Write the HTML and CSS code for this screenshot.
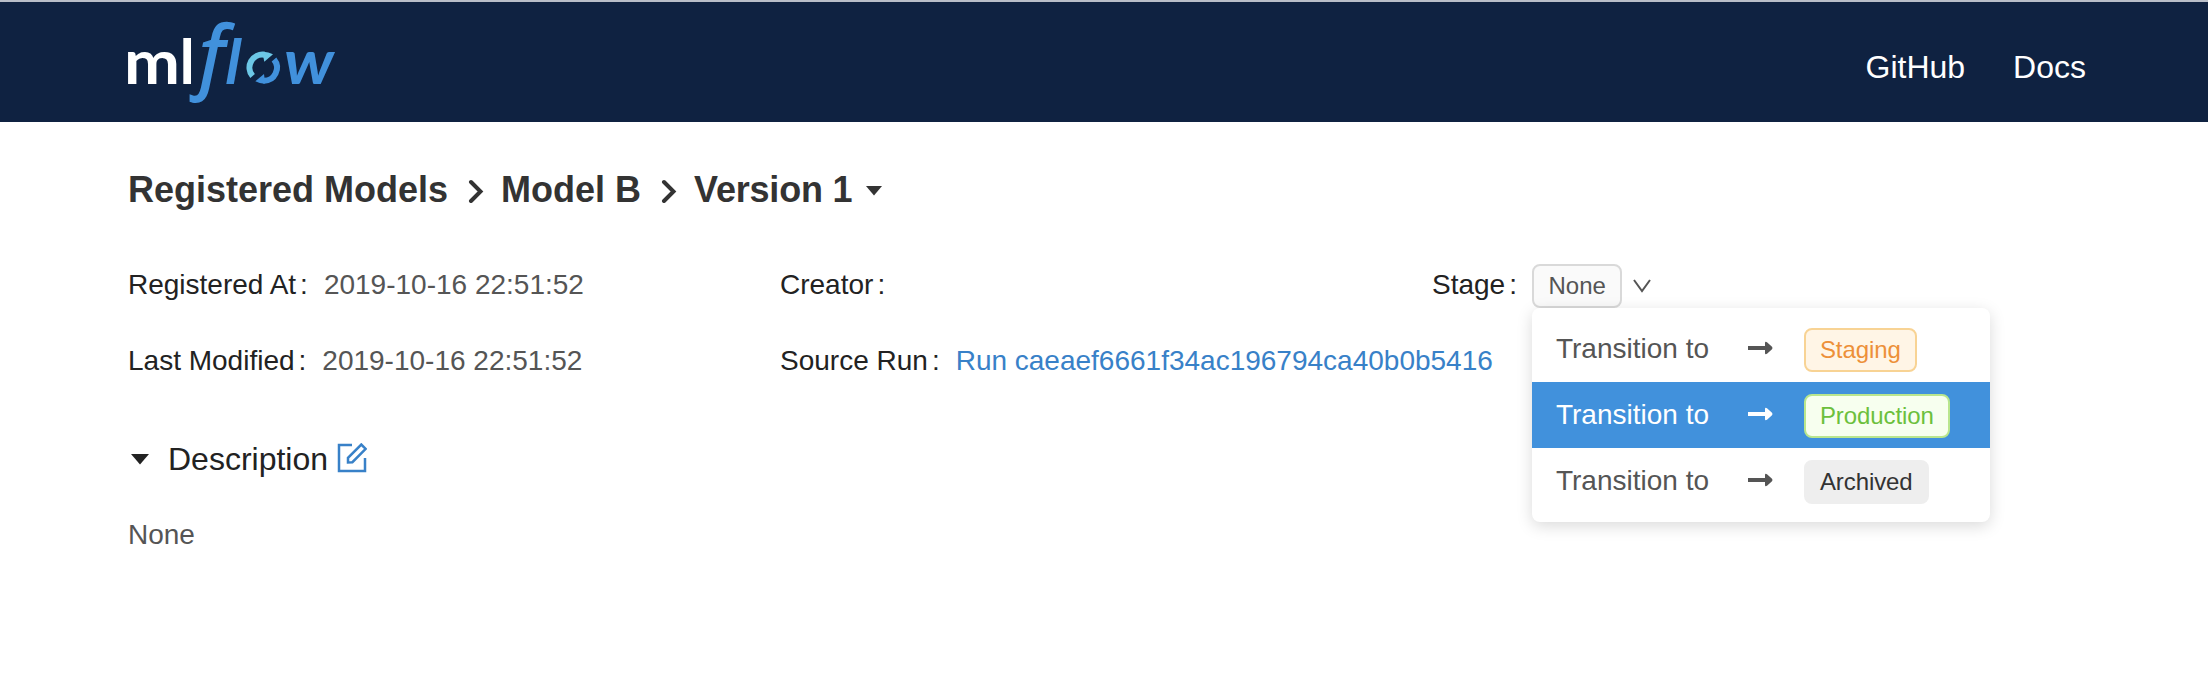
FILE: index.html
```html
<!DOCTYPE html>
<html lang="en">
<head>
<meta charset="utf-8">
<title>MLflow</title>
<link rel="stylesheet" href="styles.css">
</head>
<body>
<header class="header">
  <svg class="logo" width="210" height="84" viewBox="0 0 210 84" role="img" aria-label="mlflow">
    <text class="logo-ml" x="-4" y="64" textLength="56" lengthAdjust="spacingAndGlyphs">m</text>
    <text class="logo-ml" x="51.500" y="64">l</text>
    <text class="logo-f" transform="translate(71.500 63) scale(.98 .98)">f</text>
    <text class="logo-flow" transform="translate(97 64) skewX(-3)">l</text>
    <text class="logo-flow" x="156" y="64" textLength="50" lengthAdjust="spacingAndGlyphs">w</text>
    <path class="ring-light" d="M124.600 56A13 13 0 0 1 136.500 34.700"/>
    <path class="tip-light" d="M135.500 31.700q5 0 9.500 2.600l-8.700 7.400-.8-4z"/>
    <path class="ring-blue" d="M146 39.500A13 13 0 0 1 135.500 60.700"/>
    <path class="tip-blue" d="M136.500 63.700q-5 0-9.200-2.400L136 54l.5 4z"/>
  </svg>
  <nav class="nav"><a>GitHub</a><a>Docs</a></nav>
</header>
<main class="page">
  <h1 class="crumbs">
    <span>Registered Models</span>
    <svg class="chevron" width="16" height="24" viewBox="0 0 16 24"><path d="M3 3l9.500 9.500L3 22"/></svg>
    <span>Model B</span>
    <svg class="chevron" width="16" height="24" viewBox="0 0 16 24"><path d="M3 3l9.500 9.500L3 22"/></svg>
    <span class="version">Version 1</span>
    <svg class="caret" width="16" height="10" viewBox="0 0 16 10"><path d="M0 0h16L8 9.500z"/></svg>
  </h1>
  <div class="details">
    <div class="item"><span class="label">Registered At</span><span>2019-10-16 22:51:52</span></div>
    <div class="item"><span class="label">Creator</span></div>
    <div class="item">
      <span class="label">Stage</span>
      <div class="stage">
        <span class="tag current">None</span>
        <svg class="down" width="18" height="14" viewBox="0 0 18 14"><path d="M1 1l8 11 8-11"/></svg>
        <ul class="menu">
          <li class="option"><span class="move">Transition to</span><svg class="arrow" width="26" height="14" viewBox="0 0 26 14"><path d="M0 5h17V2q0-2 2-.8l5 4.600q1 1.200 0 2.400l-5 4.600Q17 14 17 12V9H0z"/></svg><span class="tag staging">Staging</span></li>
          <li class="option active"><span class="move">Transition to</span><svg class="arrow" width="26" height="14" viewBox="0 0 26 14"><path d="M0 5h17V2q0-2 2-.8l5 4.600q1 1.200 0 2.400l-5 4.600Q17 14 17 12V9H0z"/></svg><span class="tag production">Production</span></li>
          <li class="option"><span class="move">Transition to</span><svg class="arrow" width="26" height="14" viewBox="0 0 26 14"><path d="M0 5h17V2q0-2 2-.8l5 4.600q1 1.200 0 2.400l-5 4.600Q17 14 17 12V9H0z"/></svg><span class="tag archived">Archived</span></li>
        </ul>
      </div>
    </div>
    <div class="item"><span class="label">Last Modified</span><span>2019-10-16 22:51:52</span></div>
    <div class="item"><span class="label">Source Run</span><a class="link">Run caeaef6661f34ac196794ca40b0b5416</a></div>
  </div>
  <h2 class="section">
    <svg class="caret" width="18" height="11" viewBox="0 0 18 11"><path d="M0 0h18L9 10.500z"/></svg>
    <span class="section-title">Description</span>
    <svg class="edit" width="30" height="30" viewBox="0 0 30 30"><path d="M15 2H2v26h26V15"/><path d="M11 19.500v-4.700L24.300 1.500l4.400 4.400L15.400 19.200z"/></svg>
  </h2>
  <p class="note">None</p>
</main>
</body>
</html>
```
FILE: styles.css
```css
* { box-sizing: border-box; }
body {
  margin: 0;
  background: #fff;
  color: #555;
  font: 28px/42px "Liberation Sans", Arial, sans-serif;
}
.header {
  display: flex;
  justify-content: space-between;
  height: 122px;
  padding: 18px 122px 0 128px;
  border-top: 2px solid #b9bec8;
  background: #0f2241;
}
.logo { overflow: visible; }
.logo-ml { font: 700 62px Lato, sans-serif; fill: #fff; }
.logo-f { font: italic 400 80px "Open Sans", sans-serif; fill: #4191dc; stroke: #4191dc; stroke-width: 2; }
.logo-flow { font: italic 700 62px Lato, sans-serif; fill: #4191dc; }
.ring-light, .ring-blue { fill: none; stroke-width: 6; }
.ring-light { stroke: #6cc7e6; }
.ring-blue { stroke: #4191dc; }
.tip-light { fill: #6cc7e6; }
.tip-blue { fill: #4191dc; }
.nav { display: flex; gap: 48px; padding-top: 26px; color: #fff; font-size: 32px; }
.page { padding: 45px 124px 0 128px; }
.crumbs {
  display: flex;
  align-items: center;
  height: 48px;
  margin: 0;
  color: #333;
  font-size: 36px;
}
.crumbs span { padding-bottom: 2px; }
.version { letter-spacing: -.2px; }
.chevron { margin: 0 17px 0 20px; fill: none; stroke: currentColor; stroke-width: 4; stroke-linecap: round; }
.caret { fill: currentColor; }
.crumbs .caret { margin: -1px 0 0 14px; }
.details {
  display: grid;
  grid-template-columns: repeat(3, 652px);
  row-gap: 32px;
  margin-top: 49px;
}
.item { display: flex; align-items: center; height: 44px; white-space: nowrap; }
.item > span, .item > a { padding-bottom: 2px; }
.label { color: #222; }
.label::after { content: ":"; margin: 0 16px 0 4px; }
.stage { position: relative; display: flex; align-items: center; margin-left: -1px; }
.tag {
  height: 44px;
  padding: 0 14px;
  border: 2px solid #d9d9d9;
  border-radius: 8px;
  background: #fafafa;
  color: #555;
  font-size: 24px;
  line-height: 40px;
  letter-spacing: -.1px;
}
.current { padding: 0 14.500px; letter-spacing: 0; }
.down { margin-left: 11px; fill: none; stroke: #555; stroke-width: 2; }
.menu {
  position: absolute;
  top: 44px;
  left: 0;
  width: 458px;
  margin: 0;
  padding: 8px 0;
  list-style: none;
  border-radius: 8px;
  background: #fff;
  box-shadow: 0 4px 16px rgba(0, 0, 0, .15);
}
.option { display: flex; align-items: center; height: 66px; padding-left: 24px; }
.move { width: 192px; }
.arrow { margin: -3px 30px 0 0; fill: currentColor; }
.option .tag { margin-top: 2px; }
.active { background: #4191dc; color: #fff; }
.staging { border-color: #f8d394; background: #fff5e6; color: #ed9039; }
.production { border-color: #b9e68d; background: #f7ffef; color: #6cc03c; }
.archived { border-color: #eee; background: #eee; color: #333; }
.link { color: #3881c8; }
.section {
  display: flex;
  align-items: center;
  height: 48px;
  margin: 51px 0 0;
  padding-left: 3px;
  color: #222;
  font-size: 32px;
  font-weight: 400;
}
.section-title { margin: 0 9px 0 19px; }
.edit { margin-top: -2px; fill: none; stroke: #3881c8; stroke-width: 2.500; }
.note { margin: 31px 0 0; }
```
